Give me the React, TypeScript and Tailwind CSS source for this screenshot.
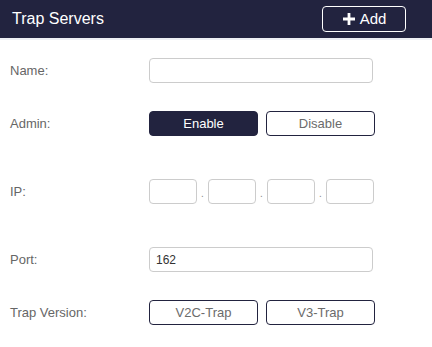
import React, { useState } from "react"

const Row = ({ label, className, children }: { label: string; className: string; children: React.ReactNode }) => (
  <div className={`flex items-center h-[25px] ${className}`}>
    <div className="w-[139px] text-[13px] text-[#666]">{label}</div>
    {children}
  </div>
)

const App = () => {
  const [admin, setAdmin] = useState<string>("enable")
  const [version, setVersion] = useState<string>("")

  return (
    <div className="w-[432px] h-[347px] bg-white pl-[10px] font-['Liberation_Sans',Arial,sans-serif]">
      <div className="-ml-[10px] h-[38px] bg-[#22233f] flex items-center justify-between pl-[12px] pr-[26px] border-b-2 border-[#eef0f5] box-content">
        <span className="text-white text-[16px]">Trap Servers</span>
        <button className="w-[84px] h-[26px] border border-white rounded-[4px] text-white text-[15px] flex items-center justify-center gap-[4px]">
          <svg width="14" height="14" viewBox="0 0 14 14">
            <path d="M7 1v12M1 7h12" stroke="white" strokeWidth="2.8" />
          </svg>
          Add
        </button>
      </div>

      <Row label="Name:" className="mt-[18px]">
        <input className="w-[224px] h-[25px] border border-[#cccccc] rounded-[4px] px-2 text-[12px] outline-none" />
      </Row>

      <Row label="Admin:" className="mt-[28px]">
        <div className="flex gap-[8px]">
          {["enable", "disable"].map((v) => (
            <button
              key={v}
              onClick={() => setAdmin(v)}
              className={`w-[109px] h-[25px] rounded-[4px] border border-[#22233f] text-[13px] ${admin === v ? "bg-[#22233f] text-white" : "bg-white text-[#6b6b6b]"}`}
            >
              {v === "enable" ? "Enable" : "Disable"}
            </button>
          ))}
        </div>
      </Row>

      <Row label="IP:" className="mt-[43px]">
        <div className="flex items-center">
          {[0, 1, 2, 3].map((i) => (
            <React.Fragment key={i}>
              {i > 0 && <span className="w-[11px] text-center text-[10px] text-[#888] pt-[4px]">.</span>}
              <input className="w-[48px] h-[25px] border border-[#cccccc] rounded-[4px] px-1 text-[12px] outline-none" />
            </React.Fragment>
          ))}
        </div>
      </Row>

      <Row label="Port:" className="mt-[43px]">
        <input defaultValue="162" className="w-[224px] h-[25px] border border-[#cccccc] rounded-[4px] px-[6px] text-[12px] text-[#333] outline-none" />
      </Row>

      <Row label="Trap Version:" className="mt-[28px]">
        <div className="flex gap-[8px]">
          {["V2C-Trap", "V3-Trap"].map((v) => (
            <button
              key={v}
              onClick={() => setVersion(v)}
              className={`w-[109px] h-[25px] rounded-[4px] border border-[#22233f] text-[13px] ${version === v ? "bg-[#22233f] text-white" : "bg-white text-[#6b6b6b]"}`}
            >
              {v}
            </button>
          ))}
        </div>
      </Row>
    </div>
  )
}

export default App
